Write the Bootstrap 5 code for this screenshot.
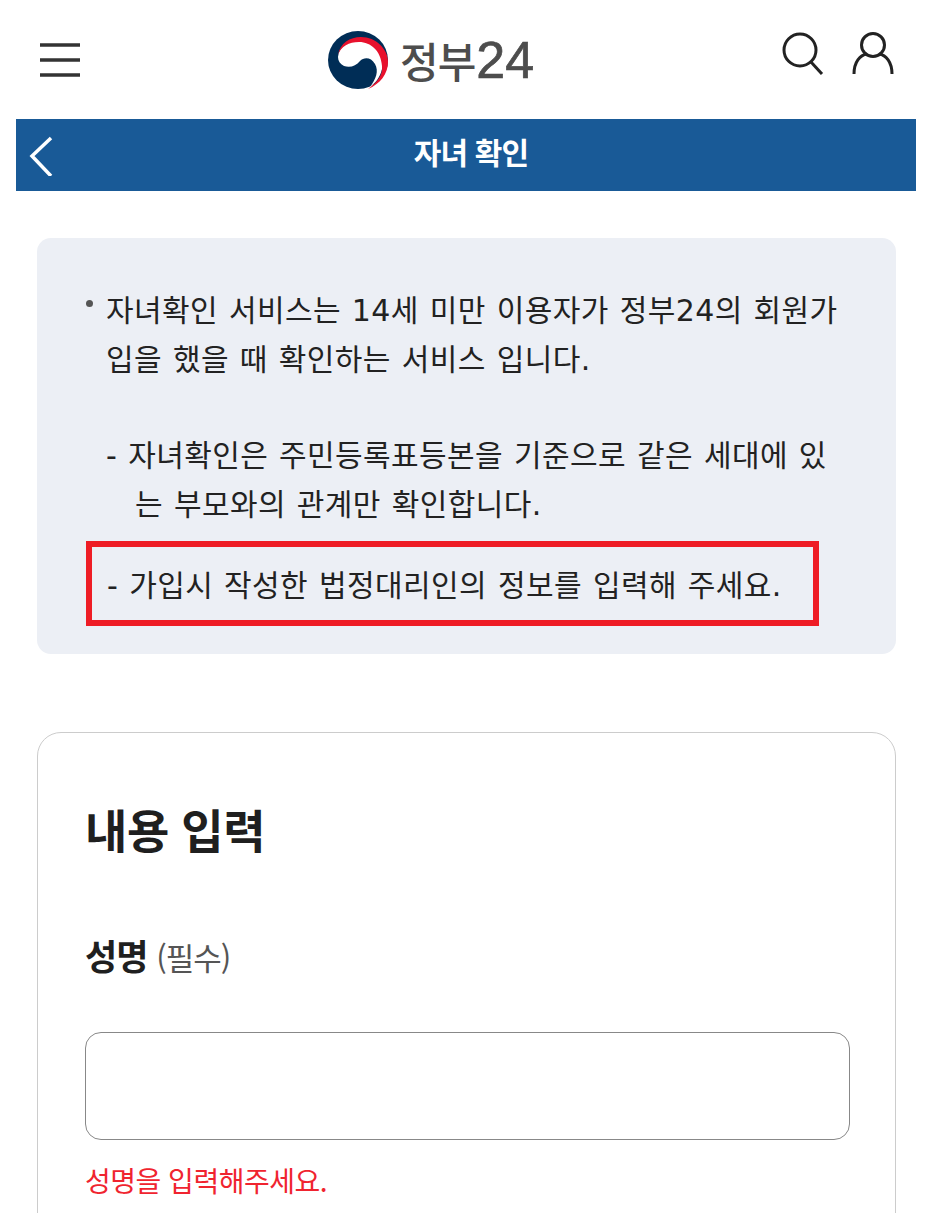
<!DOCTYPE html>
<html lang="ko">
<head>
  <meta charset="UTF-8">
  <title>자녀 확인</title>
  <meta name="viewport" content="width=device-width, initial-scale=1">
  <link href="https://cdn.jsdelivr.net/npm/bootstrap@5.3.0/dist/css/bootstrap.min.css" rel="stylesheet">
  <style>
    body {
      font-family: "Noto Sans CJK KR", "Noto Sans", sans-serif;
      color: #222;
      background: #fff;
    }
    .page-clip { height: 1213px; overflow: hidden; }
    .top-head { height: 119px; padding: 0 34px 0 40px; position: relative; }
    .gov-logo { position: absolute; left: 328px; top: 30px; gap: 12px; }
    .logo-text { font-size: 42px; font-weight: 500; color: #4d4d4d; letter-spacing: -1px; line-height: 60px; white-space: nowrap; }
    .logo-num { font-family: "Liberation Sans", sans-serif; font-size: 52px; font-weight: 400; letter-spacing: 0; margin-left: 1px; -webkit-text-stroke: .7px #4d4d4d; }
    .head-icons { gap: 27px; margin-top: -14px; }
    .title-bar { height: 72px; margin: 0 12px 0 16px; background: #195a97; color: #fff; position: relative; }
    .title-bar h1 { font-size: 30px; font-weight: 700; margin: 0; letter-spacing: -.9px; position: relative; top: -4px; left: 5px; }
    .back-arrow { position: absolute; left: 12px; top: 17px; }
    .notice-box { margin: 47px 32px 0 37px; background: #eceff5; border-radius: 14px; padding: 48px 49px 29px; height: 416px;
      font-family: "DejaVu Sans", "Noto Sans CJK KR", sans-serif; font-size: 30px; line-height: 49px; letter-spacing: .4px; word-spacing: 1px; }
    .notice-first { padding-left: 20px; position: relative; margin-bottom: 47px; white-space: nowrap; }
    .notice-first::before { content: ""; position: absolute; left: 0; top: 14px; width: 7px; height: 7px; border-radius: 50%; background: #555; }
    .notice-sub { padding-left: 20px; margin-bottom: 12px; white-space: nowrap; }
    .notice-sub span { display: block; padding-left: 29px; }
    .notice-sub span:first-child { padding-left: 0; }
    .red-mark { border: 6px solid #ee1c25; height: 85px; padding: 14px 0 0 15px; margin-right: 28px; white-space: nowrap; }
    .form-box { margin: 78px 32px 0 37px; border: 1px solid #ccc; border-radius: 24px; height: 600px; padding: 63px 47px 0; }
    .form-box h2 { font-size: 46px; font-weight: 700; line-height: 64px; margin: 0 0 71px; letter-spacing: -.4px; color: #1f1f1f; }
    .field-label { font-size: 35px; font-weight: 700; line-height: 48px; margin-bottom: 51px; letter-spacing: -1px; color: #1f1f1f; }
    .field-label span { font-size: 31px; font-weight: 400; color: #555; }
    .name-input { height: 108px; border: 1.500px solid #888; border-radius: 16px; width: 765px; }
    .err-msg { color: #f0242f; font-size: 28px; line-height: 42px; margin-top: 19px; letter-spacing: -.5px; }
  </style>
</head>
<body>
  <div class="page-clip">
    <header class="top-head d-flex align-items-center justify-content-between">
      <svg width="40" height="36" viewBox="0 0 40 36" aria-hidden="true">
        <path d="M0 3h40M0 18h40M0 33h40" stroke="#333" stroke-width="3.500" fill="none"/>
      </svg>
      <a class="gov-logo d-flex align-items-center text-decoration-none" href="#">
        <svg width="60" height="58" viewBox="0 0 60 58" aria-hidden="true">
          <ellipse cx="30" cy="29" rx="30" ry="29" fill="#002d56"/>
          <path d="M10 26C11 14 22 9 33 10 46 11 56 22 54 38 52 47 47 52 42 56 48 48 51 40 47 33 43 26 36 26 32 30 28 35 22 37 16 35 12 33 10 30 10 26z" fill="#fff"/>
          <path d="M10 24C12 12 22 6 33 6 48 6 60 18 60 31 60 43 52 53 40 58 50 51 55 43 54 35 53 20 43 11 31 11 21 11 13 15 10 24z" fill="#e8112d"/>
        </svg>
        <span class="logo-text">정부<span class="logo-num">24</span></span>
      </a>
      <div class="head-icons d-flex align-items-center">
        <svg width="44" height="44" viewBox="0 0 44 44" aria-hidden="true">
          <circle cx="19" cy="19" r="16" stroke="#222" stroke-width="3" fill="none"/>
          <path d="M30 31l11 12" stroke="#222" stroke-width="3" fill="none"/>
        </svg>
        <svg width="42" height="44" viewBox="0 0 42 44" aria-hidden="true">
          <circle cx="21" cy="14" r="11.500" stroke="#222" stroke-width="3" fill="none"/>
          <path d="M2 43c0-12 6-19 13-20M40 43c0-12-6-19-13-20" stroke="#222" stroke-width="3" fill="none"/>
        </svg>
      </div>
    </header>

    <div class="title-bar d-flex align-items-center justify-content-center">
      <svg class="back-arrow" width="26" height="40" viewBox="0 0 26 40" aria-hidden="true">
        <path d="M23 2L4 20l19 20" stroke="#fff" stroke-width="3.500" fill="none"/>
      </svg>
      <h1>자녀 확인</h1>
    </div>

    <section class="notice-box">
      <div class="notice-first">자녀확인 서비스는 14세 미만 이용자가 정부24의 회원가<br>입을 했을 때 확인하는 서비스 입니다.</div>
      <div class="notice-sub">
        <span>- 자녀확인은 주민등록표등본을 기준으로 같은 세대에 있</span>
        <span>는 부모와의 관계만 확인합니다.</span>
      </div>
      <div class="red-mark"><span class="d-block">- 가입시 작성한 법정대리인의 정보를 입력해 주세요.</span></div>
    </section>

    <section class="form-box">
      <h2>내용 입력</h2>
      <div class="field-label">성명 <span>(필수)</span></div>
      <div class="name-input"></div>
      <div class="err-msg">성명을 입력해주세요.</div>
    </section>
  </div>
  <script src="https://cdn.jsdelivr.net/npm/bootstrap@5.3.0/dist/js/bootstrap.bundle.min.js"></script>
</body>
</html>
